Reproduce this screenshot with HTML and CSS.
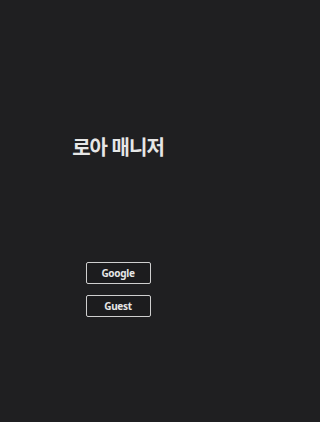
FILE: index.html
```html
<!DOCTYPE html>
<html lang="ko">
<head>
<meta charset="utf-8">
<link rel="stylesheet" href="styles.css">
</head>
<body>
<main class="screen">
  <h1 class="title">로아 매니저</h1>
  <div class="actions">
    <button class="btn">Google</button>
    <button class="btn">Guest</button>
  </div>
</main>
</body>
</html>
```
FILE: styles.css
```css
html, body {
  margin: 0;
  padding: 0;
  background: #1f1f21;
}
.screen {
  width: 236px;
  height: 422px;
  display: flex;
  flex-direction: column;
  align-items: center;
  font-family: "Noto Sans CJK KR", "Noto Sans", sans-serif;
  color: #e6e6e6;
}
.title {
  margin: 133px 0 0;
  font-size: 20px;
  line-height: 28px;
  font-weight: 700;
  letter-spacing: -1px;
}
.actions {
  margin-top: 101px;
  display: flex;
  flex-direction: column;
  gap: 11px;
}
.btn {
  width: 65px;
  height: 22px;
  padding: 0;
  background: #1c1c1e;
  border: 1px solid #cfcfcf;
  border-radius: 2px;
  color: #e6e6e6;
  font-family: "Noto Sans", sans-serif;
  font-size: 10px;
  font-weight: 700;
  letter-spacing: -0.3px;
  line-height: 20px;
}
```
